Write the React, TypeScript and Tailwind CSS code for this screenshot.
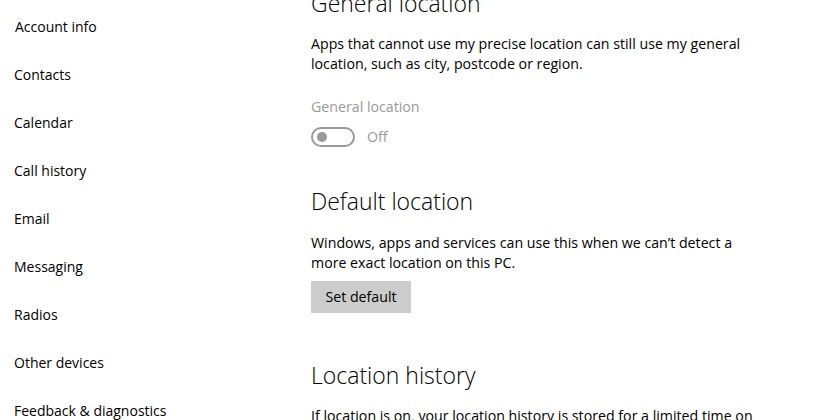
import React from "react";

const nav = [
  "Account info",
  "Contacts",
  "Calendar",
  "Call history",
  "Email",
  "Messaging",
  "Radios",
  "Other devices",
  "Feedback & diagnostics",
];

export default function App() {
  return (
    <div
      className="w-[816px] h-[420px] overflow-hidden bg-white text-black flex items-start"
      style={{ fontFamily: '"Open Sans", "Noto Sans", sans-serif' }}
    >
      <div className="w-[311px] shrink-0 pl-[14px] pt-[2px] flex flex-col">
        {nav.map((n, i) => (
          <div key={n} className={`h-12 shrink-0 flex items-center text-[14px] ${i === 0 ? "pl-[1px]" : ""}`}>
            {n}
          </div>
        ))}
      </div>
      <div className="flex flex-col shrink-0 mt-[-11px] w-[470px] [&>*]:shrink-0">
        <div className="h-[28px] leading-[28px] text-[23px] font-light">General location</div>
        <div className="mt-[17px] text-[14.2px] leading-[20px]">
          Apps that cannot use my precise location can still use my general
          <br />
          location, such as city, postcode or region.
        </div>
        <div className="mt-[23px] text-[14.2px] leading-[20px] text-[#999999]">General location</div>
        <div className="mt-[10px] flex items-center h-[20px]">
          <div className="w-[44px] h-[20px] rounded-full border-2 border-[#999999] flex items-center pl-[4px]">
            <div className="w-[10px] h-[10px] rounded-full bg-[#999999]" />
          </div>
          <span className="ml-[12px] text-[14.2px] text-[#999999]">Off</span>
        </div>
        <div className="mt-[40px] h-[28px] leading-[28px] text-[23px] font-light">Default location</div>
        <div className="mt-[18px] text-[14.2px] leading-[20px]">
          Windows, apps and services can use this when we can’t detect a
          <br />
          more exact location on this PC.
        </div>
        <button className="mt-[8px] w-[100px] h-[32px] bg-[#cccccc] text-[14.2px] flex items-center justify-center">
          Set default
        </button>
        <div className="mt-[48px] h-[28px] leading-[28px] text-[23px] font-light">Location history</div>
        <div className="mt-[17px] text-[14.2px] leading-[20px] whitespace-nowrap">
          If location is on, your location history is stored for a limited time on
        </div>
      </div>
    </div>
  );
}
